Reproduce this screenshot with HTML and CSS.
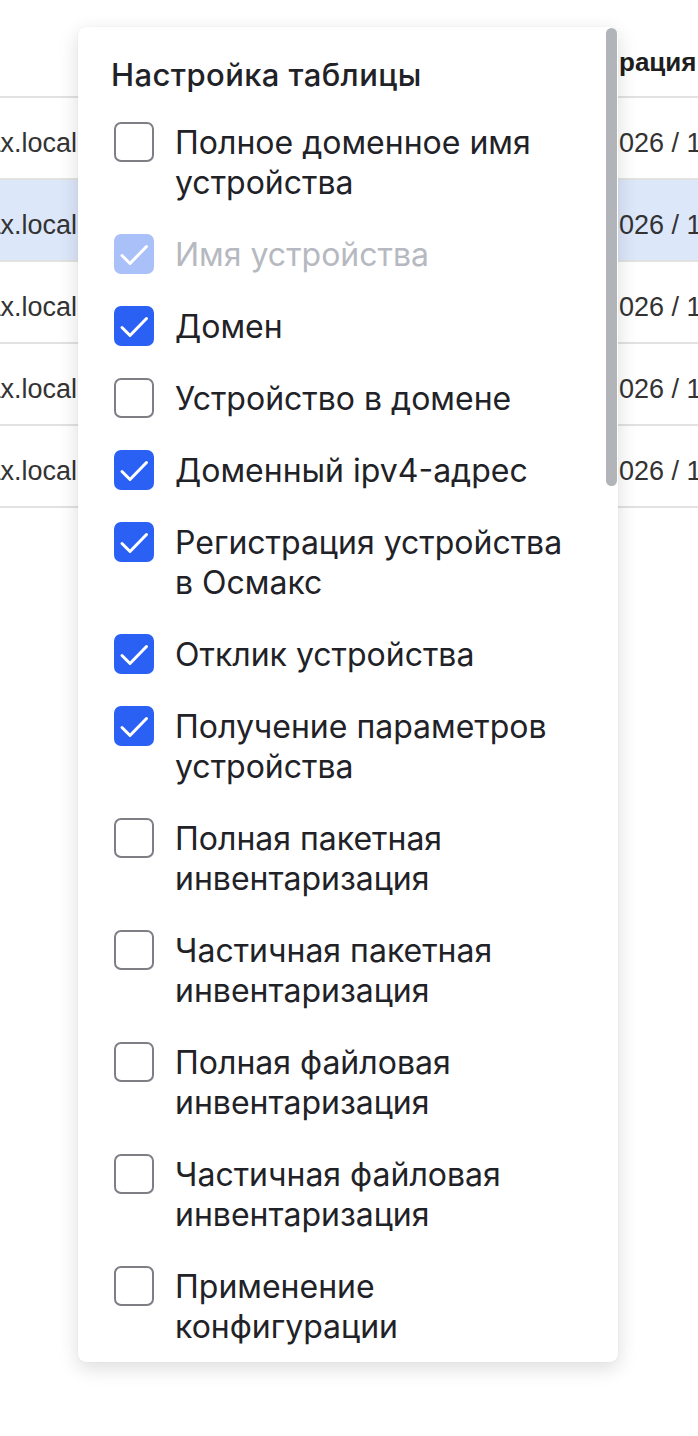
FILE: index.html
```html
<!DOCTYPE html>
<html lang="ru">
<head>
    <meta charset="UTF-8">
    <meta name="viewport" content="width=device-width, initial-scale=1.0">
    <title>Устройства</title>
    <link rel="stylesheet" href="styles.css">
</head>
<body>
    <div class="table">
        <div class="row head">
            <div class="cell host"></div>
            <div class="cell hidden"></div>
            <div class="cell date">рация</div>
        </div>
        <div class="row">
            <div class="cell host"><span>srv-01.osmax.local</span></div>
            <div class="cell hidden"></div>
            <div class="cell date">026 / 10:12</div>
        </div>
        <div class="row selected">
            <div class="cell host"><span>srv-02.osmax.local</span></div>
            <div class="cell hidden"></div>
            <div class="cell date">026 / 10:14</div>
        </div>
        <div class="row">
            <div class="cell host"><span>srv-03.osmax.local</span></div>
            <div class="cell hidden"></div>
            <div class="cell date">026 / 10:15</div>
        </div>
        <div class="row">
            <div class="cell host"><span>srv-04.osmax.local</span></div>
            <div class="cell hidden"></div>
            <div class="cell date">026 / 10:17</div>
        </div>
        <div class="row">
            <div class="cell host"><span>srv-05.osmax.local</span></div>
            <div class="cell hidden"></div>
            <div class="cell date">026 / 10:21</div>
        </div>
    </div>

    <div class="popup">
        <div class="popup-title">Настройка таблицы</div>
        <ul class="options">
            <li class="option"><span class="box"></span><span>Полное доменное имя устройства</span></li>
            <li class="option disabled"><span class="box checked"></span><span>Имя устройства</span></li>
            <li class="option"><span class="box checked"></span><span>Домен</span></li>
            <li class="option"><span class="box"></span><span>Устройство в домене</span></li>
            <li class="option"><span class="box checked"></span><span>Доменный ipv4-адрес</span></li>
            <li class="option"><span class="box checked"></span><span>Регистрация устройства в Осмакс</span></li>
            <li class="option"><span class="box checked"></span><span>Отклик устройства</span></li>
            <li class="option"><span class="box checked"></span><span>Получение параметров устройства</span></li>
            <li class="option"><span class="box"></span><span>Полная пакетная инвентаризация</span></li>
            <li class="option"><span class="box"></span><span>Частичная пакетная инвентаризация</span></li>
            <li class="option"><span class="box"></span><span>Полная файловая инвентаризация</span></li>
            <li class="option"><span class="box"></span><span>Частичная файловая инвентаризация</span></li>
            <li class="option"><span class="box"></span><span>Применение конфигурации</span></li>
        </ul>
        <div class="scroll-thumb"></div>
    </div>
</body>
</html>
```

FILE: styles.css
```css
* {
    margin: 0;
    padding: 0;
    box-sizing: border-box;
}

body {
    font-family: "Liberation Sans", Arial, sans-serif;
    background: #fff;
    color: #333;
    width: 698px;
    height: 1436px;
    overflow: hidden;
    position: relative;
}

/* table behind the popup */
.row {
    display: flex;
    height: 82px;
    padding-top: 10px;
    border-bottom: 2px solid #e2e2e2;
    align-items: center;
    font-size: 27px;
}

.row.head {
    height: 98px;
    padding-top: 28px;
    font-size: 26px;
    font-weight: 700;
    color: #1e1e1e;
}

.row.selected {
    background: #dde7fa;
}

.cell {
    white-space: nowrap;
    overflow: hidden;
}

.cell.host {
    width: 78px;
    display: flex;
    justify-content: flex-end;
    padding-right: 1px;
}

.cell.hidden {
    width: 541px;
}

.cell.date {
    flex: 1;
}

/* column settings popup */
.popup {
    position: absolute;
    top: 27px;
    left: 78px;
    width: 540px;
    height: 1335px;
    background: #fff;
    border-radius: 8px;
    box-shadow: 0 6px 20px rgba(0, 0, 0, 0.14), 0 0 2px rgba(0, 0, 0, 0.06);
    padding: 30px 42px 0 33px;
    overflow: hidden;
    font-family: Inter, "Noto Sans", sans-serif;
    color: #1f2227;
}

.popup-title {
    font-size: 31px;
    font-weight: 500;
    letter-spacing: 0.4px;
    line-height: 36px;
    margin-bottom: 30px;
}

.options {
    list-style: none;
    display: flex;
    flex-direction: column;
    gap: 32px;
    padding-left: 3px;
}

.option {
    display: flex;
    align-items: flex-start;
    gap: 21px;
    font-size: 32px;
    line-height: 40px;
}

.option.disabled {
    color: #b6b9bf;
}

.box {
    flex: none;
    width: 40px;
    height: 40px;
    border: 2px solid #7d7f84;
    border-radius: 7px;
    margin-top: -1px;
}

.box.checked {
    border: none;
    background: #2b60f4 url("data:image/svg+xml,%3Csvg xmlns='http://www.w3.org/2000/svg' viewBox='0 0 40 40'%3E%3Cpath d='M8 21.5l8 8L32.5 12.5' fill='none' stroke='white' stroke-width='3' stroke-linecap='round' stroke-linejoin='round'/%3E%3C/svg%3E") no-repeat center;
}

.option.disabled .box.checked {
    background-color: #a9c1f8;
}

.scroll-thumb {
    position: absolute;
    top: 1px;
    right: 1px;
    width: 11px;
    height: 458px;
    border-radius: 6px;
    background: #b1b4b9;
}
```
